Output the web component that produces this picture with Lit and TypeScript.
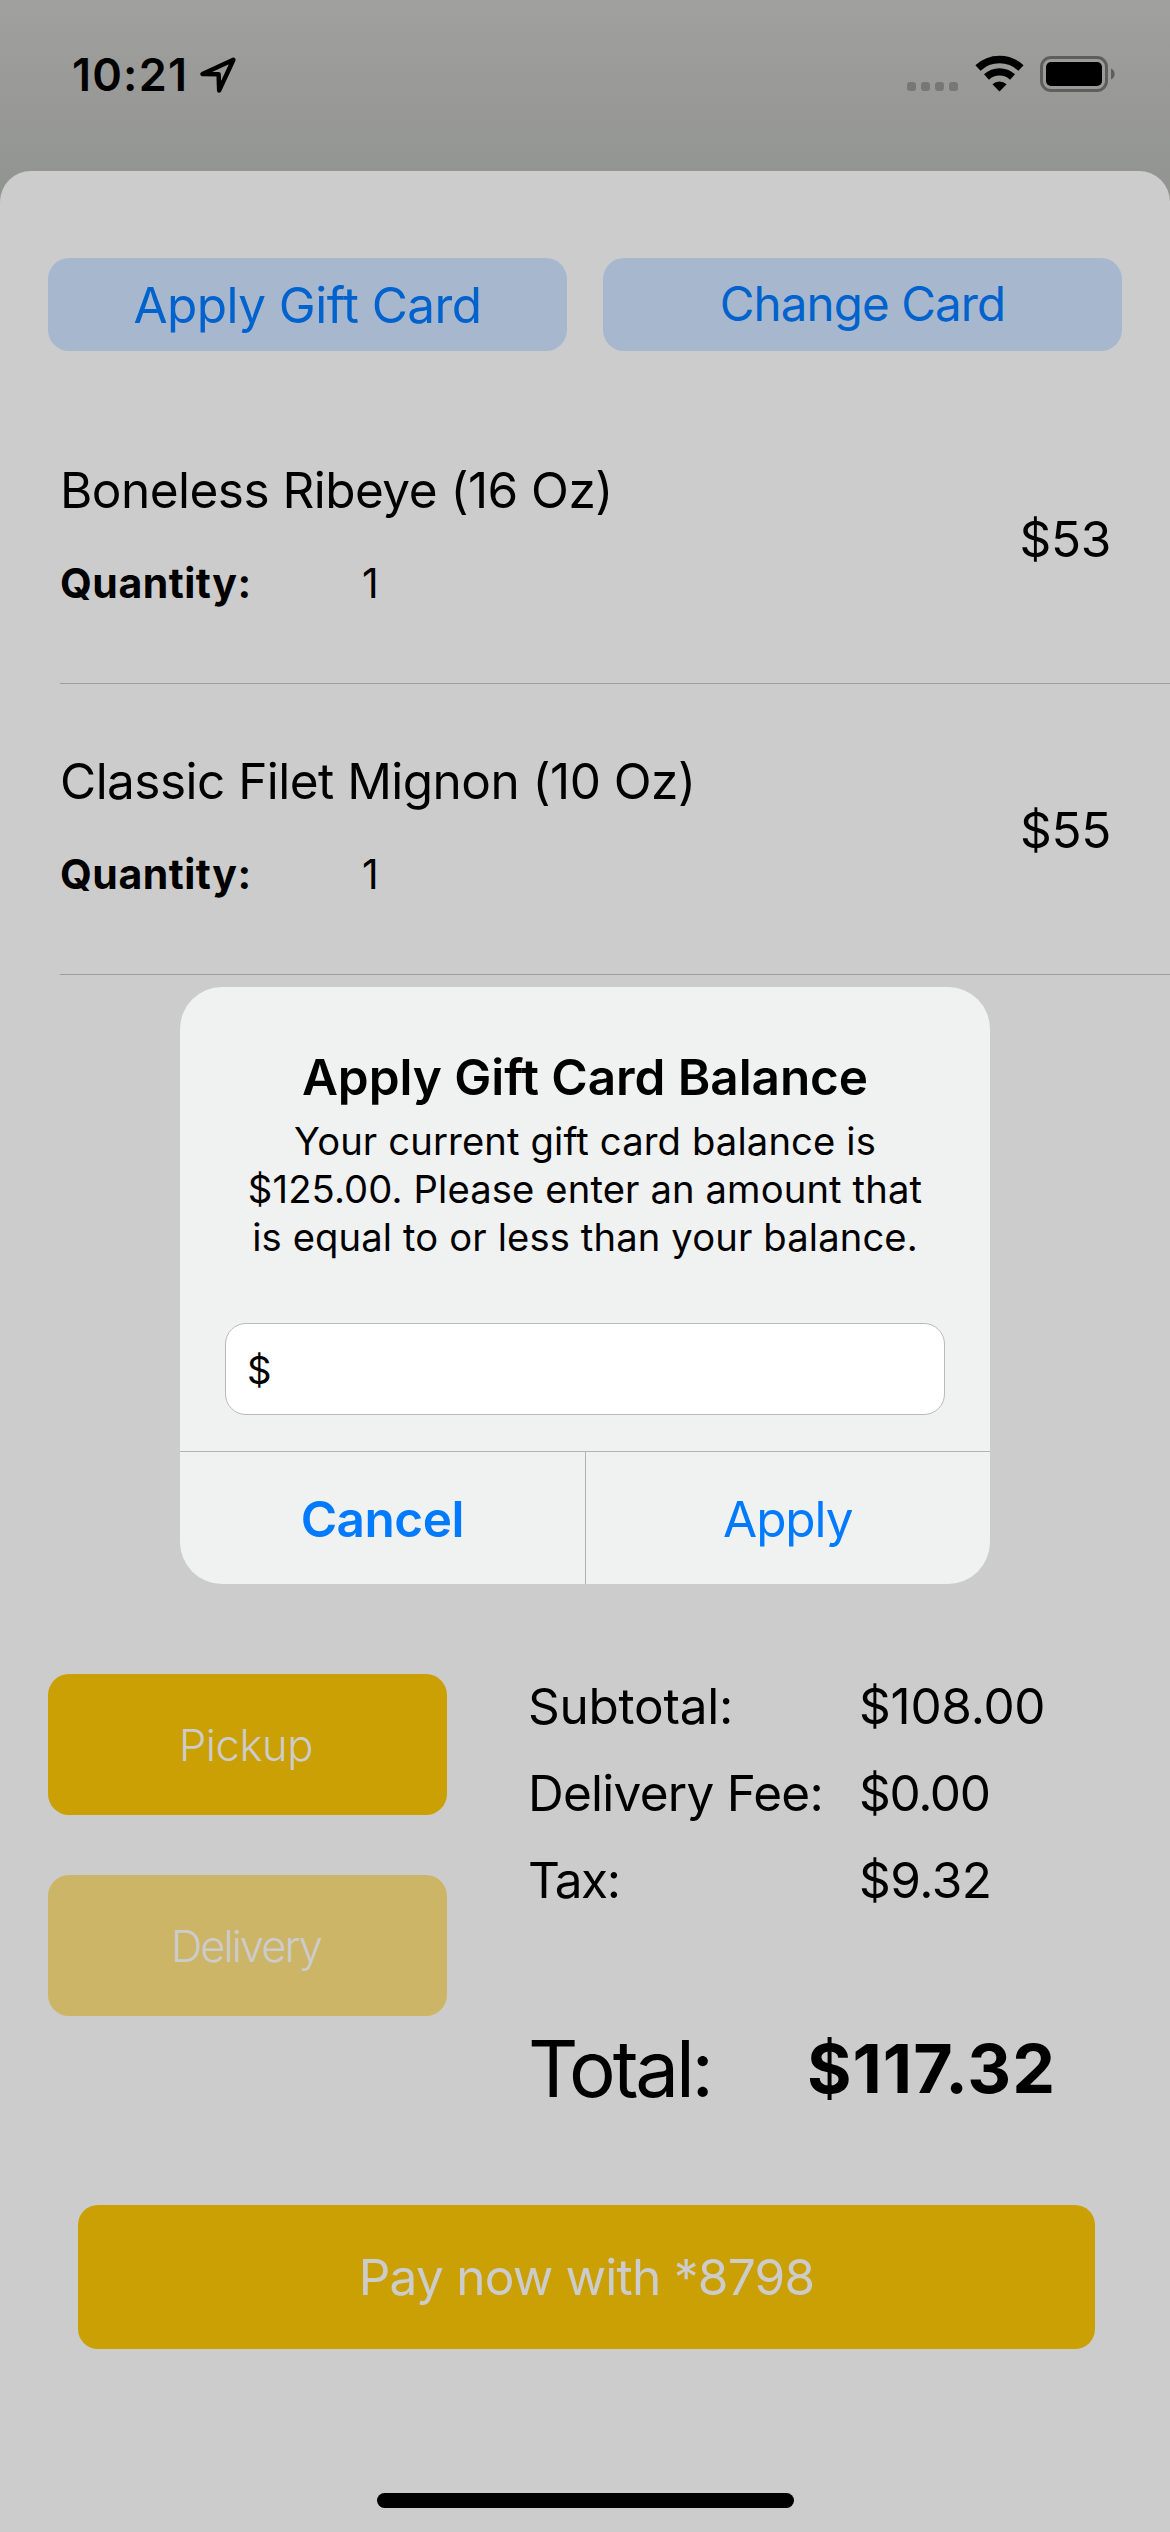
import { LitElement, html, css } from "lit";
import { customElement, property } from "lit/decorators.js";

interface OrderItem {
  name: string;
  quantity: number;
  price: string;
}

interface Charge {
  label: string;
  amount: string;
  kind: string;
}

const items: OrderItem[] = [
  { name: "Boneless Ribeye (16 Oz)", quantity: 1, price: "$53" },
  { name: "Classic Filet Mignon (10 Oz)", quantity: 1, price: "$55" },
];

const charges: Charge[] = [
  { label: "Subtotal:", amount: "$108.00", kind: "subtotal" },
  { label: "Delivery Fee:", amount: "$0.00", kind: "fee" },
  { label: "Tax:", amount: "$9.32", kind: "tax" },
];

@customElement("status-bar")
export class StatusBar extends LitElement {
  static styles = css`
    :host {
      display: flex;
      align-items: center;
      box-sizing: border-box;
      height: 148px;
      padding: 0 54px 0 72px;
    }
    .time {
      width: 127px;
      font-size: 45px;
      font-weight: 600;
      line-height: 54px;
      letter-spacing: 1.2px;
      padding-top: 2px;
    }
    .location {
      width: 38px;
      height: 38px;
      margin-top: 2px;
    }
    .spacer {
      flex: 1;
    }
    .cell {
      display: flex;
      gap: 5px;
      margin: 25px 16.5px 0 0;
    }
    .cell i {
      width: 9px;
      height: 9px;
      border-radius: 3px;
      background: #777876;
    }
    .wifi {
      width: 49px;
      height: 37px;
      margin: -1px 16.5px 0 0;
    }
    .battery {
      width: 76px;
      height: 36px;
    }
  `;

  render() {
    return html`
      <div class="time">10:21</div>
      <svg class="location" viewBox="0 0 38 38">
        <path
          d="M34.4 3.8 L3.5 18 L19.6 18.3 L20.2 34.4 Z"
          fill="none"
          stroke="#000"
          stroke-width="4.5"
          stroke-linejoin="round"
        />
      </svg>
      <div class="spacer"></div>
      <div class="cell"><i></i><i></i><i></i><i></i></div>
      <svg class="wifi" viewBox="0 0 49 37">
        <g fill="none" stroke="#000">
          <path d="M3 13 A31.5 31.5 0 0 1 46 13" stroke-width="7.7" />
          <path d="M11.5 22 A19.1 19.1 0 0 1 37.5 22" stroke-width="7.3" />
        </g>
        <path d="M24.5 36.6 L17.4 29.3 A10.2 10.2 0 0 1 31.6 29.3 Z" />
      </svg>
      <svg class="battery" viewBox="0 0 76 36">
        <rect x="1.5" y="1.5" width="65" height="33" rx="9.5" fill="none" stroke="#5e5f5d" stroke-width="3" />
        <rect x="6" y="6" width="56" height="24" rx="5" />
        <path d="M71 12.5 A6 6 0 0 1 71 23.5 Z" fill="#5e5f5d" />
      </svg>
    `;
  }
}

@customElement("order-row")
export class OrderRow extends LitElement {
  @property({ attribute: false }) item!: OrderItem;

  static styles = css`
    :host {
      display: flex;
      justify-content: space-between;
      align-items: center;
      box-sizing: border-box;
      height: 291px;
      margin-left: 60px;
      padding-right: 59px;
      border-bottom: 1px solid #9d9d9e;
      font-size: 49.5px;
    }
    .details {
      display: flex;
      flex-direction: column;
      gap: 38px;
      padding-bottom: 8px;
    }
    .name {
      line-height: 60px;
      letter-spacing: -0.53px;
      white-space: nowrap;
    }
    .quantity {
      display: flex;
      font-size: 41px;
      line-height: 50px;
    }
    .quantity-label {
      width: 302px;
      font-weight: 700;
      letter-spacing: 0.5px;
    }
    .price {
      line-height: 60px;
      letter-spacing: -0.3px;
      padding-top: 2px;
    }
  `;

  render() {
    return html`
      <div class="details">
        <div class="name">${this.item.name}</div>
        <div class="quantity">
          <span class="quantity-label">Quantity:</span>
          <span>${this.item.quantity}</span>
        </div>
      </div>
      <div class="price">${this.item.price}</div>
    `;
  }
}

@customElement("gift-card-alert")
export class GiftCardAlert extends LitElement {
  static styles = css`
    :host {
      display: block;
      box-sizing: border-box;
      width: 810px;
      height: 597px;
      padding-top: 60px;
      border-radius: 42px;
      overflow: hidden;
      background: #f0f1f1;
      text-align: center;
    }
    .title {
      font-size: 49.5px;
      font-weight: 600;
      line-height: 60px;
      letter-spacing: -0.07px;
    }
    .message {
      margin-top: 10px;
      font-size: 38.2px;
      line-height: 48px;
      letter-spacing: 0.13px;
    }
    .field {
      display: flex;
      align-items: center;
      box-sizing: border-box;
      height: 92px;
      margin: 62px 45px 36px;
      padding: 2px 0 0 21px;
      border: 1px solid #b9bbba;
      border-radius: 21px;
      background: #fff;
      font-size: 38.2px;
    }
    .actions {
      display: flex;
      height: 132px;
      border-top: 1px solid #b1b3b2;
    }
    .action {
      display: flex;
      flex: 1;
      align-items: center;
      justify-content: center;
      padding-top: 2px;
      color: #007aff;
      font-size: 49.5px;
      letter-spacing: -1.1px;
    }
    .cancel {
      border-right: 1px solid #b1b3b2;
      font-weight: 600;
      letter-spacing: -0.5px;
    }
  `;

  render() {
    return html`
      <div class="title">Apply Gift Card Balance</div>
      <div class="message">
        Your current gift card balance is<br />$125.00. Please enter an amount that<br />is equal to or less than your
        balance.
      </div>
      <div class="field">$</div>
      <div class="actions">
        <div class="action cancel">Cancel</div>
        <div class="action">Apply</div>
      </div>
    `;
  }
}

@customElement("app-root")
export class AppRoot extends LitElement {
  static styles = css`
    :host {
      display: block;
      position: relative;
      width: 1170px;
      height: 2532px;
      overflow: hidden;
      background: linear-gradient(#a0a09f 0, #929490 190px);
      color: #000;
      font-family: Inter, "Liberation Sans", sans-serif;
      font-size: 49.5px;
    }
    .screen {
      display: flex;
      flex-direction: column;
      height: 100%;
    }
    .sheet {
      display: flex;
      flex: 1;
      flex-direction: column;
      box-sizing: border-box;
      margin-top: 23px;
      padding: 87px 0 24px;
      border-radius: 31px 31px 0 0;
      background: #ccc;
    }
    .card-actions {
      display: flex;
      gap: 36px;
      padding: 0 48px;
    }
    .card-action {
      display: flex;
      flex: 1;
      align-items: center;
      justify-content: center;
      height: 93px;
      border-radius: 21px;
      background: #a7b8ce;
      color: #0062cc;
      letter-spacing: -0.55px;
    }
    .change {
      padding-bottom: 2px;
      height: 91px;
      font-size: 47.5px;
      letter-spacing: -0.9px;
    }
    .items {
      flex: 1;
      margin-top: 42px;
    }
    .checkout {
      display: flex;
      justify-content: space-between;
      height: 457px;
      padding: 0 48px;
    }
    .methods {
      display: flex;
      flex-direction: column;
      gap: 60px;
      width: 399px;
      padding-top: 12px;
    }
    .method {
      display: flex;
      align-items: center;
      justify-content: center;
      box-sizing: border-box;
      height: 141px;
      padding-right: 3px;
      border-radius: 21px;
      background: #cba004;
      color: #ccc;
      font-size: 43.5px;
      font-weight: 300;
      letter-spacing: -0.4px;
    }
    .delivery {
      background: #ccb566;
      letter-spacing: -2px;
    }
    .summary {
      box-sizing: border-box;
      width: 594px;
      padding-top: 1px;
    }
    .charge {
      display: flex;
      line-height: 87px;
      white-space: nowrap;
    }
    .charge-label {
      width: 331px;
      letter-spacing: -0.25px;
    }
    .charge-amount {
      letter-spacing: -0.25px;
    }
    .fee .charge-label {
      letter-spacing: -0.75px;
    }
    .fee .charge-amount {
      letter-spacing: -1.3px;
    }
    .tax .charge-label {
      letter-spacing: -1.5px;
    }
    .tax .charge-amount {
      letter-spacing: -0.5px;
    }
    .total {
      display: flex;
      align-items: center;
      height: 100px;
      margin-top: 94px;
    }
    .total-label {
      width: 279px;
      font-size: 78px;
      letter-spacing: -3.2px;
    }
    .total-amount {
      font-size: 68px;
      font-weight: 700;
      letter-spacing: 1px;
    }
    .pay {
      display: flex;
      align-items: center;
      justify-content: center;
      height: 144px;
      margin: 86px 75px 144px 78px;
      border-radius: 20px;
      background: #cba004;
      color: #ccc;
      letter-spacing: -0.75px;
    }
    .home-indicator {
      align-self: center;
      width: 417px;
      height: 15px;
      border-radius: 8px;
      background: #000;
    }
    .overlay {
      position: absolute;
      inset: 0;
      display: flex;
      align-items: flex-start;
      justify-content: center;
      padding-top: 987px;
    }
  `;

  render() {
    return html`
      <div class="screen">
        <status-bar></status-bar>
        <div class="sheet">
          <div class="card-actions">
            <div class="card-action">Apply Gift Card</div>
            <div class="card-action change">Change Card</div>
          </div>
          <div class="items">${items.map((item) => html`<order-row .item=${item}></order-row>`)}</div>
          <div class="checkout">
            <div class="methods">
              <div class="method">Pickup</div>
              <div class="method delivery">Delivery</div>
            </div>
            <div class="summary">
              ${charges.map(
                (charge) => html`
                  <div class="charge ${charge.kind}">
                    <span class="charge-label">${charge.label}</span>
                    <span class="charge-amount">${charge.amount}</span>
                  </div>
                `
              )}
              <div class="total">
                <span class="total-label">Total:</span>
                <span class="total-amount">$117.32</span>
              </div>
            </div>
          </div>
          <div class="pay">Pay now with *8798</div>
          <div class="home-indicator"></div>
        </div>
      </div>
      <div class="overlay"><gift-card-alert></gift-card-alert></div>
    `;
  }
}
